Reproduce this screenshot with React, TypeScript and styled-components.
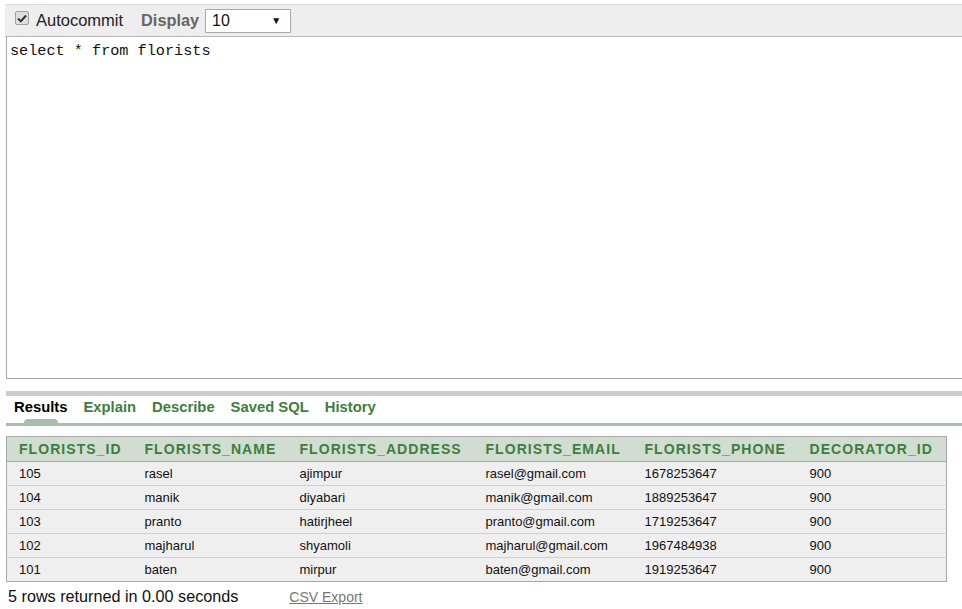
import styled, { createGlobalStyle } from "styled-components";

const GlobalStyle = createGlobalStyle`
  html, body {
    margin: 0;
    padding: 0;
    background: #ffffff;
    overflow: hidden;
  }
  body {
    font-family: "Liberation Sans", Arial, sans-serif;
    color: #222;
  }
`;

const Page = styled.div`
  width: 972px;
  padding: 4px 0 0 5px;
  box-sizing: border-box;
`;

const Toolbar = styled.div`
  display: flex;
  align-items: center;
  height: 33px;
  box-sizing: border-box;
  background: #eeeeee;
  border-top: 1px solid #dcdcdc;
  border-bottom: 1px solid #b8b8b8;
  padding-left: 10px;
`;

const CheckBox = styled.span`
  display: inline-flex;
  align-items: center;
  justify-content: center;
  width: 12px;
  height: 12px;
  border: 1px solid #a0a0a0;
  border-radius: 2px;
  background: #dedede;
  margin-right: 7px;
  margin-top: -5px;
`;

const Label = styled.span<{ $bold?: boolean }>`
  font-size: ${(p) => (p.$bold ? "16.3px" : "16.5px")};
  font-weight: ${(p) => (p.$bold ? 700 : 400)};
  color: ${(p) => (p.$bold ? "#666666" : "#222222")};
  margin-right: ${(p) => (p.$bold ? "6px" : "18px")};
`;

const Select = styled.div`
  display: flex;
  align-items: center;
  justify-content: space-between;
  width: 86px;
  height: 24px;
  box-sizing: border-box;
  border: 1px solid #a9a9a9;
  background: #ffffff;
  padding: 0 9px 0 6px;
  font-size: 16px;
  color: #111;
`;

const Arrow = styled.span`
  font-size: 10px;
  color: #111;
`;

const Editor = styled.textarea`
  display: block;
  width: 965px;
  height: 342px;
  margin: 0 0 0 1px;
  box-sizing: border-box;
  border: 1px solid #a9a9a9;
  border-top: none;
  padding: 5px 3px;
  font-family: "Liberation Mono", "DejaVu Sans Mono", monospace;
  font-size: 15.2px;
  line-height: 18px;
  color: #111;
  resize: none;
  outline: none;
  background: #fff;
`;

const Divider = styled.div`
  margin: 12px 0 0 1px;
  height: 5px;
  background: #cccccc;
`;

const Tabs = styled.div`
  display: flex;
  align-items: center;
  gap: 16px;
  height: 27px;
  margin-left: 1px;
  padding-left: 8px;
  border-bottom: 3px solid #a8bea8;
`;

const Tab = styled.span<{ $active?: boolean }>`
  position: relative;
  font-size: 14.8px;
  font-weight: 700;
  color: ${(p) => (p.$active ? "#000000" : "#3e7d3e")};
  align-self: stretch;
  display: flex;
  align-items: center;
  padding-bottom: 5px;

  ${(p) =>
    p.$active &&
    `
    &::after {
      content: "";
      position: absolute;
      left: 10px;
      width: 34px;
      bottom: 0;
      height: 4px;
      border-radius: 4px 4px 0 0;
      background: #a8bea8;
    }
  `}
`;

const Table = styled.table`
  margin: 10px 0 0 1px;
  width: 941px;
  border-collapse: collapse;
  border: 1px solid #a8a8a8;
  table-layout: fixed;
`;

const HeadCell = styled.th<{ $w?: number }>`
  box-sizing: border-box;
  width: ${(p) => (p.$w ? `${p.$w}px` : "auto")};
  height: 25px;
  padding: 0 0 0 12px;
  text-align: left;
  background: #d0ddd0;
  color: #3e7d3e;
  font-size: 14px;
  font-weight: 700;
  letter-spacing: 1.05px;
  border-bottom: 1px solid #a8a8a8;
  white-space: nowrap;
`;

const Cell = styled.td`
  box-sizing: border-box;
  height: 24px;
  padding: 0 0 0 12px;
  background: #efefef;
  font-size: 13px;
  color: #111;
  border-top: 1px solid #cfcfcf;
  white-space: nowrap;
`;

const Footer = styled.div`
  display: flex;
  align-items: baseline;
  margin: 5px 0 0 3px;
`;

const Summary = styled.span`
  font-size: 16.2px;
  color: #111;
  margin-right: 51px;
`;

const ExportLink = styled.a`
  font-size: 14px;
  color: #777777;
  text-decoration: underline;
`;

const columns = [
  { name: "FLORISTS_ID", w: 126 },
  { name: "FLORISTS_NAME", w: 155 },
  { name: "FLORISTS_ADDRESS", w: 186 },
  { name: "FLORISTS_EMAIL", w: 159 },
  { name: "FLORISTS_PHONE", w: 165 },
  { name: "DECORATOR_ID", w: 0 },
];

const rows = [
  ["105", "rasel", "ajimpur", "rasel@gmail.com", "1678253647", "900"],
  ["104", "manik", "diyabari", "manik@gmail.com", "1889253647", "900"],
  ["103", "pranto", "hatirjheel", "pranto@gmail.com", "1719253647", "900"],
  ["102", "majharul", "shyamoli", "majharul@gmail.com", "1967484938", "900"],
  ["101", "baten", "mirpur", "baten@gmail.com", "1919253647", "900"],
];

const tabs = ["Results", "Explain", "Describe", "Saved SQL", "History"];

export default function App() {
  return (
    <>
      <GlobalStyle />
      <Page>
        <Toolbar>
          <CheckBox>
            <svg width="10" height="9" viewBox="0 0 10 9">
              <path d="M1 4.5 L3.8 7.3 L9 1.5" fill="none" stroke="#333" strokeWidth="2" />
            </svg>
          </CheckBox>
          <Label>Autocommit</Label>
          <Label $bold>Display</Label>
          <Select>
            <span>10</span>
            <Arrow>▼</Arrow>
          </Select>
        </Toolbar>
        <Editor readOnly spellCheck={false} defaultValue="select * from florists" />
        <Divider />
        <Tabs>
          {tabs.map((t, i) => (
            <Tab key={t} $active={i === 0}>
              {t}
            </Tab>
          ))}
        </Tabs>
        <Table>
          <thead>
            <tr>
              {columns.map((c) => (
                <HeadCell key={c.name} $w={c.w || undefined}>
                  {c.name}
                </HeadCell>
              ))}
            </tr>
          </thead>
          <tbody>
            {rows.map((r) => (
              <tr key={r[0]}>
                {r.map((v, i) => (
                  <Cell key={i}>{v}</Cell>
                ))}
              </tr>
            ))}
          </tbody>
        </Table>
        <Footer>
          <Summary>5 rows returned in 0.00 seconds</Summary>
          <ExportLink href="#">CSV Export</ExportLink>
        </Footer>
      </Page>
    </>
  );
}
